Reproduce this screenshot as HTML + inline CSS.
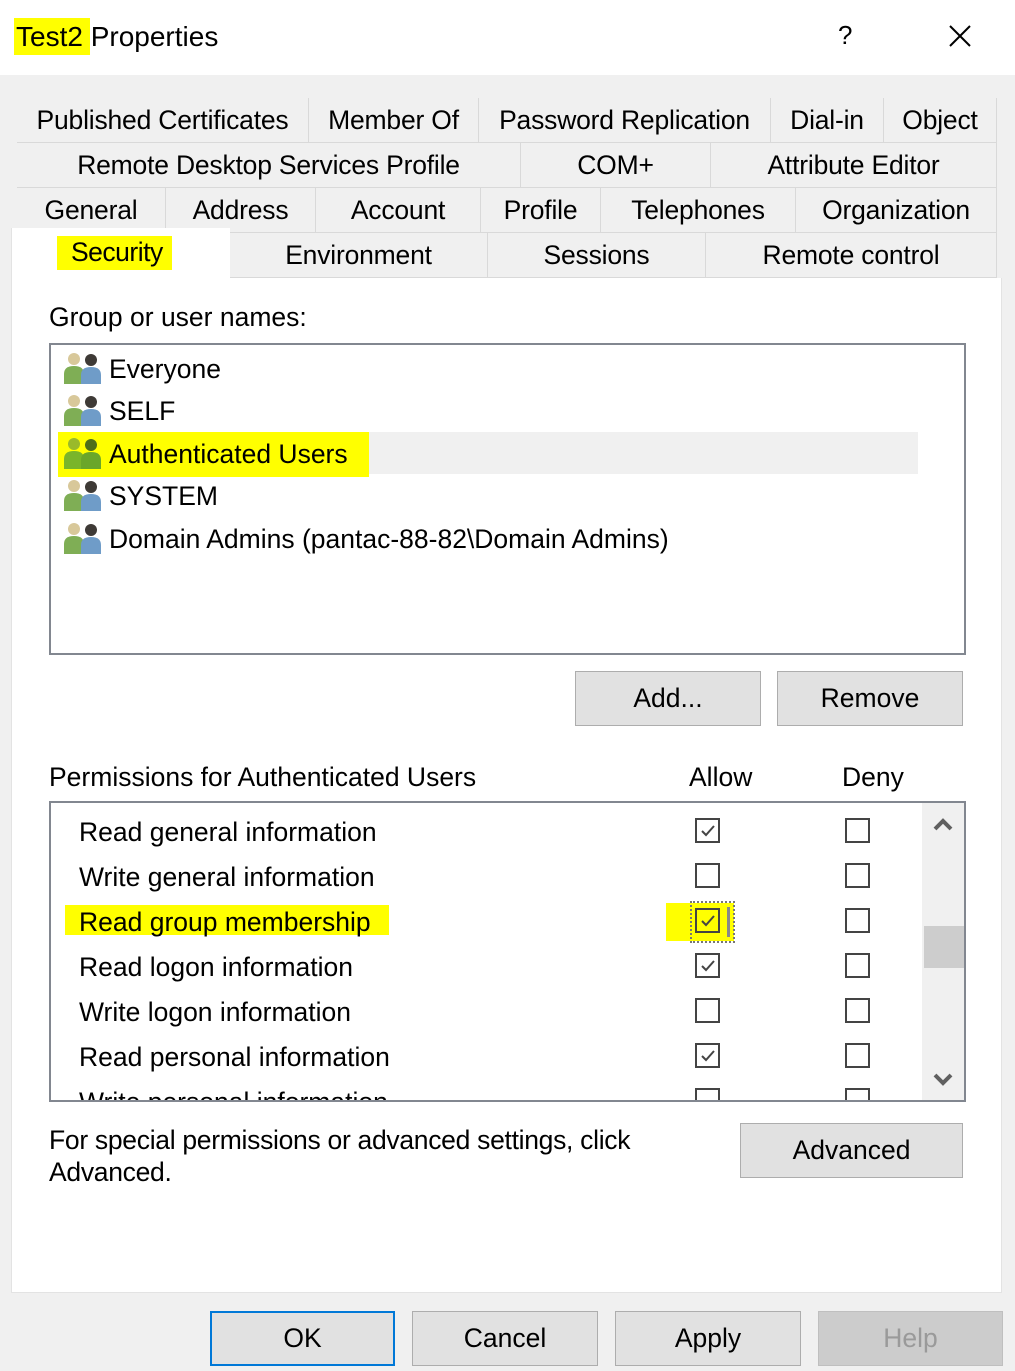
<!DOCTYPE html>
<html><head><meta charset="utf-8"><style>
*{margin:0;padding:0;box-sizing:border-box}
body{width:1015px;height:1371px;background:#f0f0f0;font-family:"Liberation Sans",sans-serif;color:#000;position:relative;overflow:hidden;font-size:26.5px}
.a{position:absolute;white-space:nowrap}
.tab{position:absolute;height:45px;border-right:1px solid #d9d9d9;border-bottom:1px solid #d9d9d9;display:flex;align-items:center;justify-content:center;background:#f0f0f0;letter-spacing:-0.2px}
.btn{position:absolute;height:55px;background:#e1e1e1;border:1px solid #adadad;display:flex;align-items:center;justify-content:center}
.cb{position:absolute;width:25px;height:25px;border:2px solid #444;background:#fff}
.cb svg{position:absolute;left:2px;top:2px}
.hl{background:#ffff00}
</style></head><body>
<div class="a" style="left:0;top:0;width:1015px;height:75px;background:#fff"></div>
<div class="a hl" style="left:14px;top:18px;width:76px;height:37px"></div>
<div class="a" style="left:16px;top:21px;font-size:28px">Test2 Properties</div>
<div class="a" style="left:838px;top:20px;font-size:26px">?</div>
<svg class="a" style="left:948px;top:24px" width="24" height="24"><path d="M2 2L22 22M22 2L2 22" stroke="#000" stroke-width="2"/></svg>

<div class="a" style="left:17px;top:98px;width:980px;height:180px;border-top:1px solid #d9d9d9;border-left:1px solid #d9d9d9"></div>
<div class="tab" style="left:17px;top:98px;width:292px">Published Certificates</div>
<div class="tab" style="left:309px;top:98px;width:170px">Member Of</div>
<div class="tab" style="left:479px;top:98px;width:292px">Password Replication</div>
<div class="tab" style="left:771px;top:98px;width:113px">Dial-in</div>
<div class="tab" style="left:884px;top:98px;width:113px">Object</div>
<div class="tab" style="left:17px;top:143px;width:504px">Remote Desktop Services Profile</div>
<div class="tab" style="left:521px;top:143px;width:190px">COM+</div>
<div class="tab" style="left:711px;top:143px;width:286px">Attribute Editor</div>
<div class="tab" style="left:17px;top:188px;width:149px">General</div>
<div class="tab" style="left:166px;top:188px;width:150px">Address</div>
<div class="tab" style="left:316px;top:188px;width:165px">Account</div>
<div class="tab" style="left:481px;top:188px;width:120px">Profile</div>
<div class="tab" style="left:601px;top:188px;width:195px">Telephones</div>
<div class="tab" style="left:796px;top:188px;width:201px">Organization</div>
<div class="tab" style="left:230px;top:233px;width:258px">Environment</div>
<div class="tab" style="left:488px;top:233px;width:218px">Sessions</div>
<div class="tab" style="left:706px;top:233px;width:291px">Remote control</div>

<div class="a" style="left:11px;top:278px;width:991px;height:1015px;background:#fff;border:1px solid #e3e3e3;border-top:none"></div>
<div class="a" style="left:11px;top:228px;width:219px;height:52px;background:#fff;border-left:1px solid #e3e3e3"></div>
<div class="a hl" style="left:57px;top:236px;width:115px;height:34px"></div>
<div class="a" style="left:71px;top:237px;letter-spacing:-0.5px">Security</div>

<div class="a" style="left:49px;top:302px">Group or user names:</div>
<div class="a" style="left:49px;top:343px;width:917px;height:312px;border:2px solid #828790;background:#fff"></div>
<div class="a" style="left:58px;top:432px;width:860px;height:42px;background:#f0f0f0"></div>
<div class="a hl" style="left:58px;top:432px;width:311px;height:45px"></div>

<svg width="0" height="0" style="position:absolute"><defs>
<g id="ppl"><circle cx="11" cy="9" r="6" fill="#d8c89a"/><path d="M1 34V24q0-8 10-8t10 8v10z" fill="#7fae55"/><circle cx="28" cy="10" r="6" fill="#3e3a36"/><path d="M18 34V25q0-8 10-8t10 8v9z" fill="#6f9cc8"/></g>
<g id="pplg"><circle cx="11" cy="9" r="6" fill="#9aba2a"/><path d="M1 34V24q0-8 10-8t10 8v10z" fill="#7ab52a"/><circle cx="28" cy="10" r="6" fill="#4e6e1a"/><path d="M18 34V25q0-8 10-8t10 8v9z" fill="#6aa62a"/></g>
</defs></svg>
<svg class="a" style="left:63px;top:350px" width="40" height="36"><use href="#ppl"/></svg>
<svg class="a" style="left:63px;top:392px" width="40" height="36"><use href="#ppl"/></svg>
<svg class="a" style="left:63px;top:435px" width="40" height="36"><use href="#pplg"/></svg>
<svg class="a" style="left:63px;top:477px" width="40" height="36"><use href="#ppl"/></svg>
<svg class="a" style="left:63px;top:520px" width="40" height="36"><use href="#ppl"/></svg>
<div class="a" style="left:109px;top:354px">Everyone</div>
<div class="a" style="left:109px;top:396px">SELF</div>
<div class="a" style="left:109px;top:439px">Authenticated Users</div>
<div class="a" style="left:109px;top:481px">SYSTEM</div>
<div class="a" style="left:109px;top:524px">Domain Admins (pantac-88-82\Domain Admins)</div>

<div class="btn" style="left:575px;top:671px;width:186px">Add...</div>
<div class="btn" style="left:777px;top:671px;width:186px">Remove</div>

<div class="a" style="left:49px;top:762px">Permissions for Authenticated Users</div>
<div class="a" style="left:689px;top:762px">Allow</div>
<div class="a" style="left:842px;top:762px">Deny</div>
<div class="a" style="left:49px;top:801px;width:917px;height:301px;border:2px solid #828790;background:#fff;overflow:hidden">
 <div class="a" style="left:871px;top:0;width:42px;height:297px;background:#f0f0f0"></div>
 <div class="a" style="left:873px;top:123px;width:40px;height:42px;background:#cdcdcd"></div>
 <svg class="a" style="left:882px;top:14px" width="20" height="14"><path d="M2 12L10 4L18 12" stroke="#606060" stroke-width="4" fill="none"/></svg>
 <svg class="a" style="left:882px;top:270px" width="20" height="14"><path d="M2 2L10 10L18 2" stroke="#606060" stroke-width="4" fill="none"/></svg>
 <div class="a hl" style="left:14px;top:102px;width:324px;height:30px"></div>
 <div class="a hl" style="left:615px;top:100px;width:68px;height:38px"></div>
 <div class="a" style="left:639px;top:98px;width:45px;height:42px;border:2px dotted #777"></div>
 <div class="a" style="left:676px;top:104px;width:3px;height:30px;background:#888"></div>
 <div class="a" style="left:28px;top:14px">Read general information</div>
 <div class="a" style="left:28px;top:59px">Write general information</div>
 <div class="a" style="left:28px;top:104px">Read group membership</div>
 <div class="a" style="left:28px;top:149px">Read logon information</div>
 <div class="a" style="left:28px;top:194px">Write logon information</div>
 <div class="a" style="left:28px;top:239px">Read personal information</div>
 <div class="a" style="left:28px;top:284px">Write personal information</div>
</div>
<div class="cb" style="left:695px;top:818px"><svg width="18" height="18"><path d="M3 9L7 13L15 4" stroke="#444" stroke-width="2" fill="none"/></svg></div>
<div class="cb" style="left:695px;top:863px"></div>
<div class="cb" style="left:695px;top:908px;background:#ffff00"><svg width="18" height="18"><path d="M3 9L7 13L15 4" stroke="#444" stroke-width="2" fill="none"/></svg></div>
<div class="cb" style="left:695px;top:953px"><svg width="18" height="18"><path d="M3 9L7 13L15 4" stroke="#444" stroke-width="2" fill="none"/></svg></div>
<div class="cb" style="left:695px;top:998px"></div>
<div class="cb" style="left:695px;top:1043px"><svg width="18" height="18"><path d="M3 9L7 13L15 4" stroke="#444" stroke-width="2" fill="none"/></svg></div>
<div class="cb" style="left:695px;top:1088px;height:12px;border-bottom:none"></div>
<div class="cb" style="left:845px;top:818px"></div>
<div class="cb" style="left:845px;top:863px"></div>
<div class="cb" style="left:845px;top:908px"></div>
<div class="cb" style="left:845px;top:953px"></div>
<div class="cb" style="left:845px;top:998px"></div>
<div class="cb" style="left:845px;top:1043px"></div>
<div class="cb" style="left:845px;top:1088px;height:12px;border-bottom:none"></div>

<div class="a" style="left:49px;top:1124px;letter-spacing:-0.3px;line-height:32px">For special permissions or advanced settings, click<br>Advanced.</div>
<div class="btn" style="left:740px;top:1123px;width:223px">Advanced</div>

<div class="btn" style="left:210px;top:1311px;width:185px;border:2px solid #0078d7">OK</div>
<div class="btn" style="left:412px;top:1311px;width:186px">Cancel</div>
<div class="btn" style="left:615px;top:1311px;width:186px">Apply</div>
<div class="btn" style="left:818px;top:1311px;width:185px;background:#cccccc;border-color:#bfbfbf;color:#9a9a9a">Help</div>
</body></html>
